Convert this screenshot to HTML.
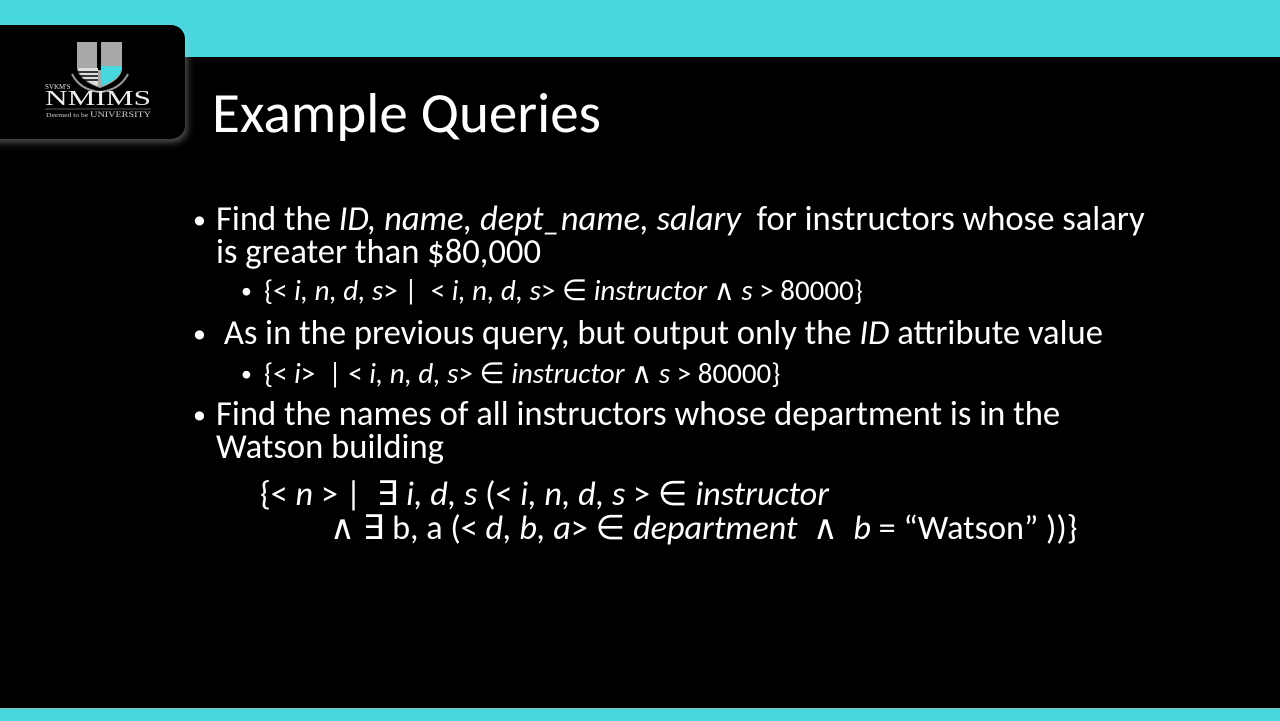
<!DOCTYPE html>
<html><head><meta charset="utf-8"><style>
*{margin:0;padding:0}
body{width:1280px;height:720px;background:#000;position:relative;overflow:hidden;font-family:"Carlito","Liberation Sans",sans-serif;color:#fff}
.top{position:absolute;left:0;top:0;width:1280px;height:57px;background:#48d6df}
.bot{position:absolute;left:0;top:708px;width:1280px;height:12px;background:#48d6df;border-top:1px solid #7fbfc4}
.logo{position:absolute;left:-20px;top:25px;width:205px;height:114px;background:#000;border-radius:0 14px 14px 0;box-shadow:2px 3px 8px rgba(200,200,200,.45)}
.l{position:absolute;white-space:nowrap;line-height:1}
.b{font-size:34.6px}
.s{font-size:29px}
.f{font-size:34.2px}
.bl{position:absolute;left:-23px;font-size:0.75em;top:0.18em}
i{font-style:italic}
</style></head><body>
<div class="top"></div>
<div class="bot"></div>
<div class="logo"></div>
<svg style="position:absolute;left:40px;top:38px" width="120" height="85" viewBox="0 0 120 85">
<path d="M37 4 H82 V30 Q82 42 60 50 Q38 42 37 30 Z" fill="#a8a8a8"/>
<rect x="57" y="4" width="4" height="28" fill="#000"/>
<path d="M61 28 H82 V30 Q82 40 62 48 Z" fill="#48d6df"/>
<path d="M38 30 H58 V48 Q40 42 38 30 Z" fill="#ddd"/>
<path d="M38 34 H58 M38 38 H58 M40 42 H58" stroke="#000" stroke-width="1.5"/>
<path d="M32 36 Q40 52 60 54 Q80 52 88 36" stroke="#999" stroke-width="2" fill="none"/>
<text x="5" y="51" font-family="Liberation Serif" font-size="7" fill="#ddd">SVKM'S</text>
<text x="5" y="67" font-family="Liberation Serif" font-size="21" fill="#eee" textLength="106" lengthAdjust="spacingAndGlyphs">NMIMS</text>
<line x1="5" y1="71" x2="111" y2="71" stroke="#aaa" stroke-width=".6"/>
<text x="6" y="79" font-family="Liberation Serif" font-size="6" fill="#ccc" textLength="105" lengthAdjust="spacingAndGlyphs">Deemed to be <tspan font-size="8">UNIVERSITY</tspan></text>
</svg>
<div class="l" style="left:212px;top:85px;font-size:57px;font-weight:300">Example Queries</div>

<div class="l b" style="left:216px;top:202px"><span class="bl">•</span>Find the <i>ID, name, dept_name, salary</i>&nbsp; for instructors whose salary</div>
<div class="l b" style="left:216px;top:235px">is greater than $80,000</div>
<div class="l s" style="left:264px;top:276px"><span class="bl">•</span>{&lt; <i>i, n, d, s</i>&gt; |&nbsp; &lt; <i>i, n, d, s</i>&gt; ∈ <i>instructor</i> ∧ <i>s</i> &gt; 80000}</div>
<div class="l b" style="left:216px;top:316px"><span class="bl">•</span>&nbsp;As in the previous query, but output only the <i>ID</i> attribute value</div>
<div class="l s" style="left:264px;top:359px"><span class="bl">•</span>{&lt; <i>i</i>&gt;&nbsp; | &lt; <i>i, n, d, s</i>&gt; ∈ <i>instructor</i> ∧ <i>s</i> &gt; 80000}</div>
<div class="l b" style="left:216px;top:397px"><span class="bl">•</span>Find the names of all instructors whose department is in the</div>
<div class="l b" style="left:216px;top:430px">Watson building</div>
<div class="l f" style="left:260px;top:477px">{&lt; <i>n</i> &gt; |&nbsp; ∃ <i>i, d, s</i> (&lt; <i>i, n, d, s</i> &gt; ∈ <i>instructor</i></div>
<div class="l f" style="left:330px;top:511px">∧ ∃ b, a (&lt; <i>d, b, a</i>&gt; ∈ <i>department</i>&nbsp; ∧&nbsp; <i>b</i> = “Watson” ))}</div>
</body></html>
